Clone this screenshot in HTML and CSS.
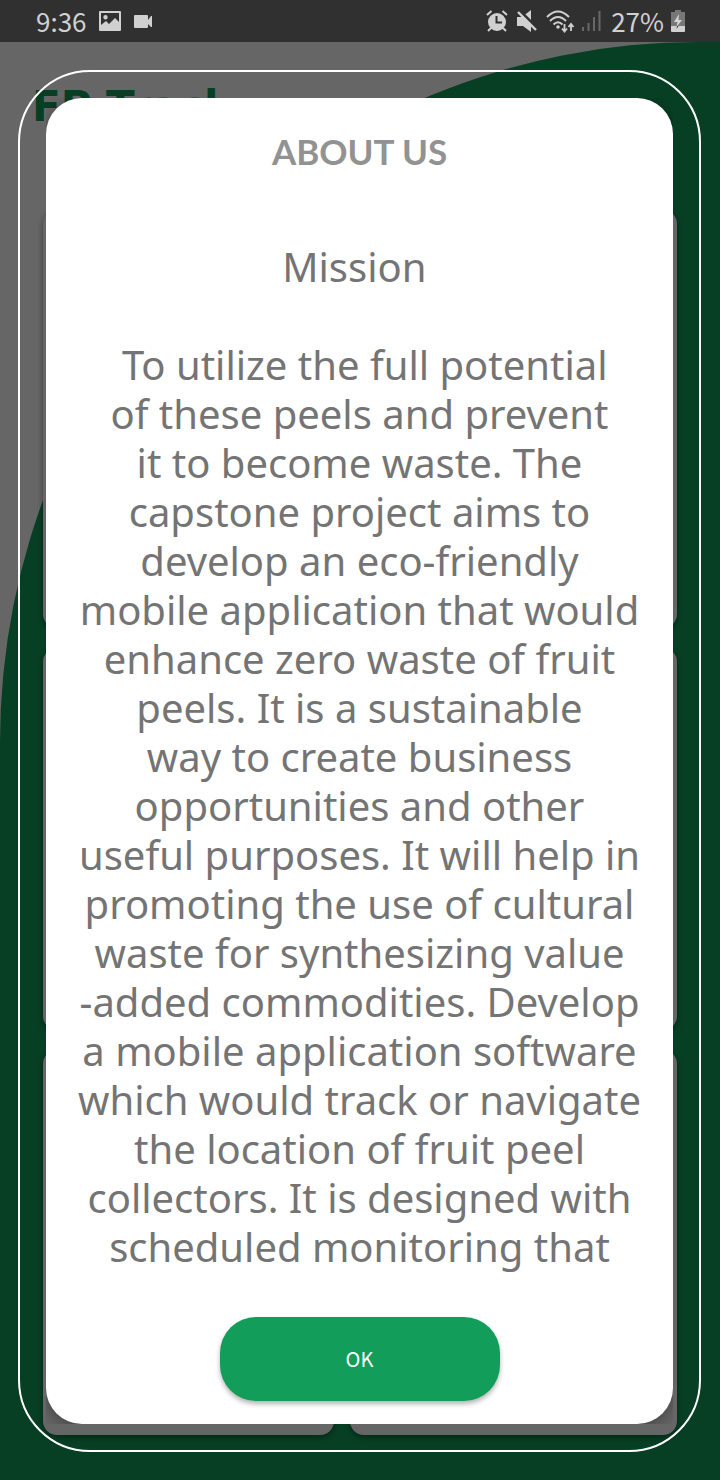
FILE: index.html
```html
<!DOCTYPE html>
<html lang="en">
<head>
<meta charset="utf-8">
<meta name="viewport" content="width=device-width, initial-scale=1">
<title>About us</title>
<link rel="stylesheet" href="styles.css">
</head>
<body>
<header class="status">
  <span class="clock">9:36</span>
  <svg class="picture" width="22" height="20" viewBox="0 0 22 20"><path fill="currentColor" fill-rule="evenodd" d="M1 0h20q1 0 1 1v18q0 1-1 1H1q-1 0-1-1V1q0-1 1-1zM2 2v12l5-4 3 3 6-6 4 4V2zM6.500 4a2.200 2.200 0 1 1 0 4.400 2.200 2.200 0 0 1 0-4.400z"/></svg>
  <svg width="18" height="13" viewBox="0 0 18 13"><path fill="currentColor" d="M1 0h12q1 0 1 1v4l3-4h1v11h-1l-3-3v3q0 1-1 1H1q-1 0-1-1V1q0-1 1-1z"/></svg>
  <span class="spacer"></span>
  <svg width="22" height="22" viewBox="0 0 22 22"><circle cx="11" cy="12" r="9" fill="currentColor"/><path d="M1 5 5.500 1M21 5l-4.500-4M5 18l-3 3M17 18l3 3" stroke="currentColor" stroke-width="2"/><path d="M10.500 6v6.500H16" fill="none" stroke="#303030" stroke-width="2"/></svg>
  <svg class="mute" width="20" height="22" viewBox="0 0 20 22"><path fill="currentColor" d="M0 7h5l9-7v22l-8-6H0z"/><path d="M2 0 20 18" stroke="#303030" stroke-width="3"/><path d="M1 2 19 20" stroke="currentColor" stroke-width="2.400"/></svg>
  <svg class="wifi" width="29" height="23" viewBox="0 0 29 23"><g fill="none" stroke="currentColor" stroke-width="2"><path d="M1 7q11-11 22 0M4 11q8-8 16 0M7.500 14.500q4.500-4.500 9 0"/><path d="M18.500 14v7M16 18.500l2.500 3 2.500-3M25 21v-7M22.500 17l2.500-3 2.500 3" stroke-width="1.800"/></g><circle cx="12" cy="17" r="1.800" fill="currentColor"/></svg>
  <svg width="19" height="20" viewBox="0 0 19 20"><path fill="#686868" d="M0 16h2v4H0zM5.500 12h2v8h-2zM11 6h2v14h-2zM16.500 0h2v20h-2z"/></svg>
  <span class="percent">27%</span>
  <svg width="14" height="22" viewBox="0 0 14 22"><path fill="#777" d="M4 0h6v2h4v14H0V2h4z"/><path fill="#d0d0d0" d="M0 16h14v5q0 1-1 1H1q-1 0-1-1z"/><path fill="#d5d5d5" d="M8 4 3 12h3.500L5.500 17 11 10H7.500z"/><path fill="#303030" d="M6 16h1.500L5.500 19z"/></svg>
</header>
<main class="app">
  <h1 class="brand">FP Track</h1>
  <div class="cards">
    <section class="card"></section><section class="card"></section>
    <section class="card"></section><section class="card"></section>
    <section class="card"></section><section class="card"></section>
  </div>
  <div class="scrim">
    <div class="frame">
      <div class="clip">
        <div class="dialog" role="dialog" aria-labelledby="about">
          <h2 class="title" id="about">ABOUT US</h2>
          <div class="copy">
            <p>Mission&nbsp;</p>
            <p>&nbsp;To utilize the full potential<br>of these peels and prevent<br>it to become waste. The<br>capstone project aims to<br>develop an eco-friendly<br>mobile application that would<br>enhance zero waste of fruit<br>peels. It is a sustainable<br>way to create business<br>opportunities and other<br>useful purposes. It will help in<br>promoting the use of cultural<br>waste for synthesizing value<br>-added commodities. Develop<br>a mobile application software<br>which would track or navigate<br>the location of fruit peel<br>collectors. It is designed with<br>scheduled monitoring that</p>
          </div>
          <button class="ok" type="button">OK</button>
        </div>
      </div>
    </div>
  </div>
</main>
</body>
</html>
```
FILE: styles.css
```css
* { box-sizing: border-box; }
body {
  margin: 0;
  min-height: 100vh;
  display: flex;
  flex-direction: column;
  font-family: "Noto Sans", sans-serif;
}
.status {
  height: 42px;
  flex: none;
  display: flex;
  align-items: center;
  padding: 0 35px 0 36px;
  background: #303030;
  color: #d0d0d0;
  font: 400 26px/42px "Noto Sans CJK SC", sans-serif;
}
.status svg { flex: none; }
.clock { margin-right: 12px; }
.picture { margin-right: 13px; }
.spacer { flex: 1; }
.mute { margin: 0 9px; }
.wifi { margin-right: 7px; }
.percent { margin: 0 7px 0 10px; }
.app {
  position: relative;
  flex: 1;
  display: flex;
  flex-direction: column;
  padding: 40px 43px 45px 32px;
  background: #fff;
  overflow: hidden;
}
.app::before {
  content: "";
  position: absolute;
  inset: 0;
  background: #129d5c;
  border-top-left-radius: 97% 700px;
}
.brand {
  position: relative;
  margin: 0 0 78px;
  color: #129d5c;
  font: 700 42px/50px "DejaVu Sans", sans-serif;
}
.cards {
  position: relative;
  flex: 1;
  display: grid;
  grid-template-columns: 291fr 327fr;
  grid-template-rows: 418fr 382fr 385fr;
  gap: 20px 16px;
  margin-left: 11px;
}
.card {
  background: #fff;
  border-radius: 14px;
  box-shadow: 0 2px 6px rgba(0, 0, 0, .4);
}
.scrim {
  position: absolute;
  inset: 0;
  padding: 28px 19px 28px 18px;
  display: flex;
  background: rgba(0, 0, 0, .6);
}
.frame {
  flex: 1;
  display: flex;
  padding: 26px;
  border: 2px solid #fff;
  border-radius: 72px;
}
.clip {
  flex: 1;
  display: flex;
  overflow: hidden;
}
.dialog {
  flex: 1;
  display: flex;
  flex-direction: column;
  align-items: center;
  padding: 29px 0 23px;
  background: #fff;
  border-radius: 36px;
  box-shadow: 0 4px 16px rgba(0, 0, 0, .35);
}
.title {
  margin: 0;
  color: #929292;
  font: 700 35px/48px Lato, sans-serif;
}
.copy {
  flex: 1;
  padding-top: 67px;
  color: #747474;
  font-size: 40px;
  line-height: 49px;
  text-align: center;
  white-space: nowrap;
}
.copy p { margin: 0 0 49px; }
.copy p:last-child { margin: 0; }
.ok {
  width: 280px;
  height: 84px;
  border: 0;
  border-radius: 36px;
  background: #129d5a;
  box-shadow: 0 3px 5px rgba(0, 0, 0, .3);
  color: #fff;
  font: 400 20px/24px "Noto Sans CJK SC", sans-serif;
}
```
